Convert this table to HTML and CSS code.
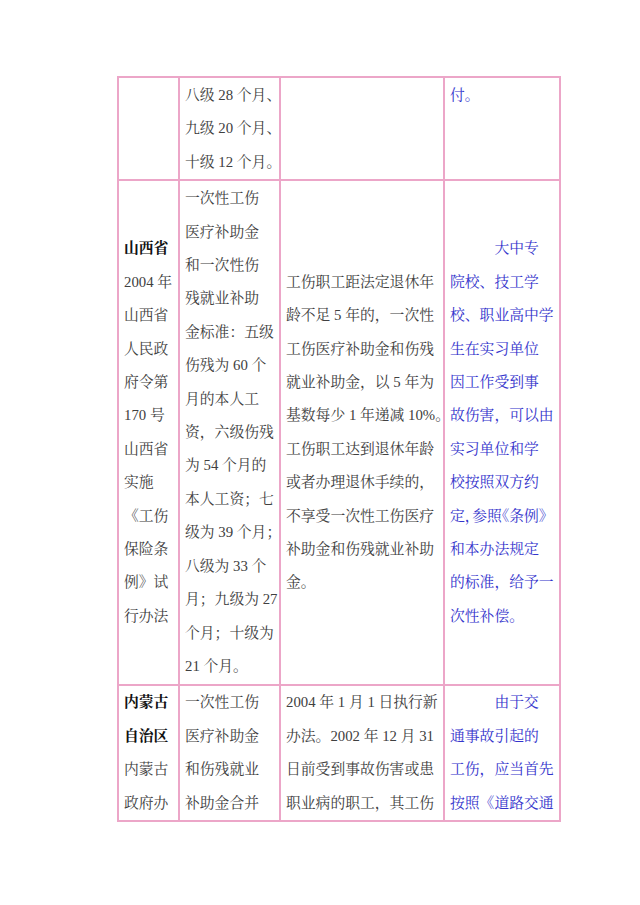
FILE: index.html
```html
<!DOCTYPE html>
<html lang="zh-CN">
<head>
<meta charset="utf-8">
<title>工伤待遇对照表</title>
<link rel="stylesheet" href="styles.css">
</head>
<body>
<div class="page">
  <table class="grid">
    <colgroup>
      <col class="c1"><col class="c2"><col class="c3"><col class="c4">
    </colgroup>
    <tr class="r1">
      <td></td>
      <td>八级 28 个月、<br>九级 20 个月、<br>十级 12 个月。</td>
      <td></td>
      <td class="blue">付。</td>
    </tr>
    <tr class="r2">
      <td><b>山西省</b><br>2004 年<br>山西省<br>人民政<br>府令第<br>170 号<br>山西省<br>实施<br>《工伤<br>保险条<br>例》试<br>行办法</td>
      <td>一次性工伤<br>医疗补助金<br>和一次性伤<br>残就业补助<br>金标准：五级<br>伤残为 60 个<br>月的本人工<br>资，六级伤残<br>为 54 个月的<br>本人工资；七<br>级为 39 个月；<br>八级为 33 个<br>月；九级为 27<br>个月；十级为<br>21 个月。</td>
      <td>工伤职工距法定退休年<br>龄不足 5 年的，一次性<br>工伤医疗补助金和伤残<br>就业补助金，以 5 年为<br>基数每少 1 年递减 10%。<br>工伤职工达到退休年龄<br>或者办理退休手续的，<br>不享受一次性工伤医疗<br>补助金和伤残就业补助<br>金。</td>
      <td class="blue"><p class="lead">大中专</p>院校、技工学<br>校、职业高中学<br>生在实习单位<br>因工作受到事<br>故伤害，可以由<br>实习单位和学<br>校按照双方约<br>定<span class="halt">，</span>参照<span class="halt">《</span>条例<span class="halt">》</span><br>和本办法规定<br>的标准，给予一<br>次性补偿。</td>
    </tr>
    <tr class="r3">
      <td><b>内蒙古<br>自治区</b><br>内蒙古<br>政府办</td>
      <td>一次性工伤<br>医疗补助金<br>和伤残就业<br>补助金合并</td>
      <td>2004 年 1 月 1 日执行新<br>办法。2002 年 12 月 31<br>日前受到事故伤害或患<br>职业病的职工，其工伤</td>
      <td class="blue"><p class="lead">由于交</p>通事故引起的<br>工伤，应当首先<br>按照《道路交通</td>
    </tr>
  </table>
</div>
</body>
</html>
```

FILE: styles.css
```css
html, body {
  margin: 0;
  padding: 0;
  background: #ffffff;
}

.page {
  width: 640px;
  height: 905px;
  padding: 76px 0 0 117px;
  box-sizing: border-box;
  overflow: hidden;
}

.grid {
  border-collapse: collapse;
  table-layout: fixed;
  width: 442px;
  font-family: "Liberation Serif", "Noto Serif CJK SC", "Noto Sans CJK SC", serif;
  font-size: 14.8px;
  line-height: 33.4px;
  color: #404040;
}

.c1 { width: 61px; }
.c2 { width: 101px; }
.c3 { width: 164px; }
.c4 { width: 116px; }

.grid td {
  border: 2px solid #eca6c8;
  padding: 0 4px 0 5px;
  white-space: nowrap;
  overflow: visible;
}

.r1 td {
  vertical-align: top;
  padding-top: 1px;
  padding-bottom: 0;
}

.r2 td {
  vertical-align: middle;
  padding-top: 1px;
  padding-bottom: 1px;
}

.r3 td {
  vertical-align: top;
  padding-top: 0;
  padding-bottom: 0;
}

.grid b {
  color: #111111;
  font-weight: bold;
}

.blue {
  color: #3434cc;
}

.lead {
  margin: 0;
  text-indent: 3em;
}

.halt {
  font-feature-settings: "halt";
}
```
